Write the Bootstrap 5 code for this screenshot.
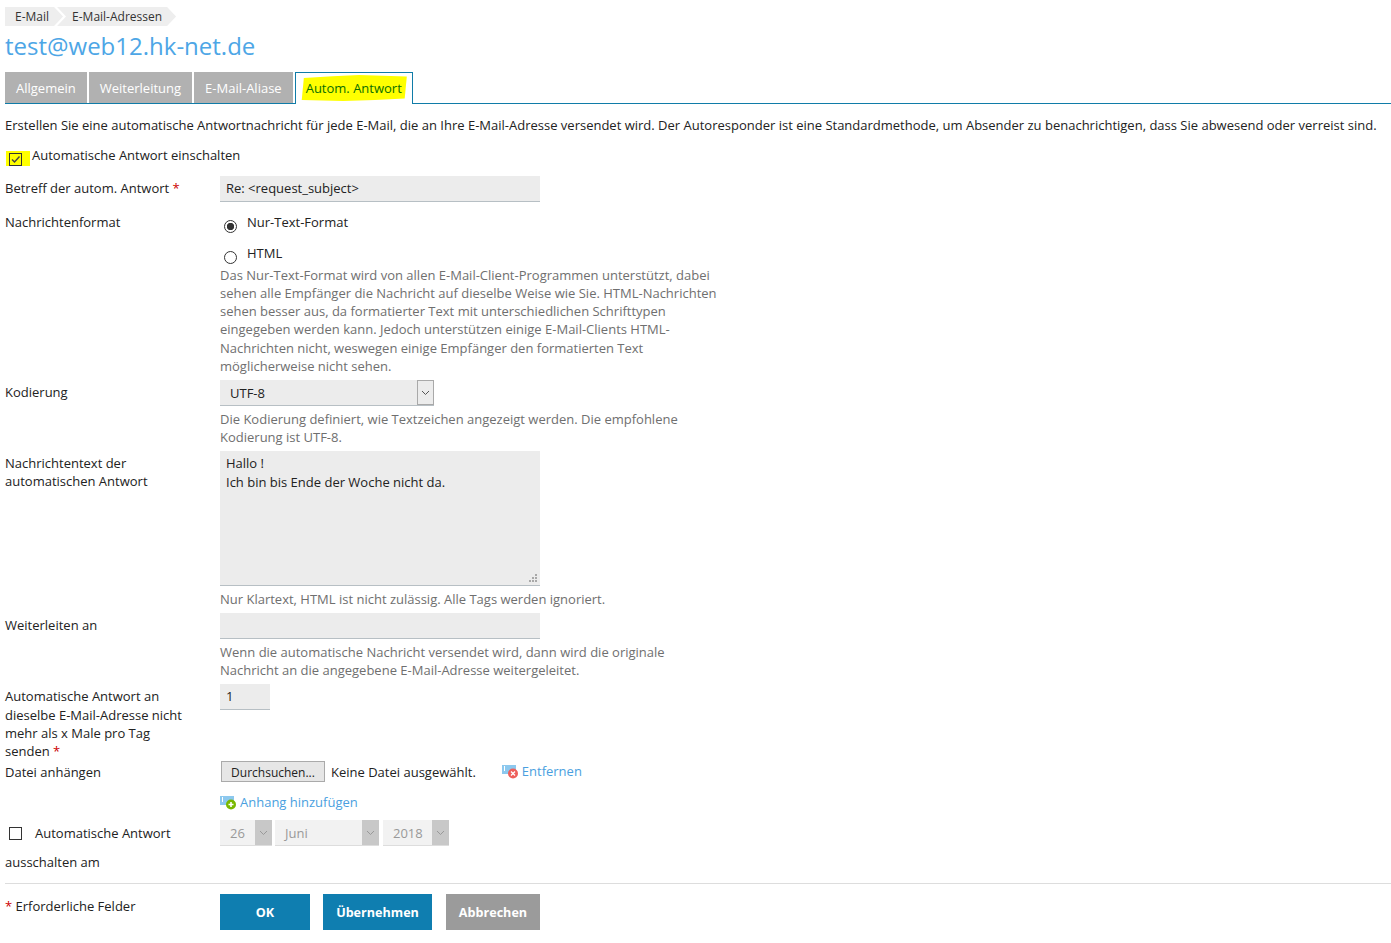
<!DOCTYPE html>
<html lang="de">
<head>
<meta charset="utf-8">
<title>Autom. Antwort</title>
<link href="https://cdn.jsdelivr.net/npm/bootstrap@5.3.0/dist/css/bootstrap.min.css" rel="stylesheet">
<style>
body{font-family:"Open Sans","Liberation Sans",sans-serif;font-size:13px;line-height:18.2px;color:#222;background:#fff;}
.pg{padding:7px 0 0 5px;width:1391px;}
.crumbs{gap:0;height:19px;font-size:12px;line-height:19px;color:#333;}
.crumb{background:#eee;padding:0 14px 0 10px;clip-path:polygon(0 0,calc(100% - 9px) 0,100% 50%,calc(100% - 9px) 100%,0 100%);}
.crumb+.crumb{margin-left:-6px;padding:0 14px 0 15px;clip-path:polygon(0 0,calc(100% - 9px) 0,100% 50%,calc(100% - 9px) 100%,0 100%,9px 50%);}
.ttl{font-size:24px;line-height:32px;color:#4da6e6;font-weight:400;margin:4px 0 10px;}
.tabs{border-bottom:1px solid #107ca8;height:32px;gap:2px;}
.tb{background:#b1b1b1;color:#fff;height:31px;line-height:33px;padding:0 11px;}
.tb.on{background:#fff;color:#0b6e00;border:1px solid #107ca8;border-bottom:0;height:32px;line-height:31px;padding:0 5px;position:relative;}
.hl{background:#ff0;padding:4px 5px;clip-path:polygon(3% 12%,30% 5%,55% 0,100% 6%,98% 90%,70% 96%,40% 100%,1% 96%);}
.intro{margin:12px 0 0;}
.chkrow{margin-top:12px;height:30px;}
.hlbox{background:#ff0;width:24px;height:15px;margin:5px 2px 0 1px;position:relative;}
.bx{appearance:none;width:13px;height:13px;border:1px solid #333;background:#fff;margin:0;display:block;flex:none;border-radius:0;}
.hlbox .bx{position:absolute;left:3px;top:2px;background:#ff0 url("data:image/svg+xml,%3Csvg xmlns='http://www.w3.org/2000/svg' viewBox='0 0 11 11'%3E%3Cpath d='M2 5.500l2.500 2.500L9.500 2.500' fill='none' stroke='%23444' stroke-width='1.400'/%3E%3C/svg%3E") center/11px no-repeat;}
.rad{appearance:none;width:13px;height:13px;border:1px solid #333;border-radius:50%;background:#fff;margin:7px 0 0 4px;flex:none;display:block;}
.rad:checked{background:radial-gradient(circle,#333 0 3.4px,#fff 4px);}
.radtxt{margin-left:10px;}
.radone{padding-top:3px;height:34px;}
.radtwo{height:22px;}
.frow{display:flex;}
.gap5{margin-top:5px;}
.gap4{margin-top:4px;}
.gap8{margin-top:8px;}
.gap10{margin-top:10px;}
.lbl{width:215px;flex:none;padding-right:28px;padding-top:3px;}
.lbl-up{padding-top:2.9px;}
.lbl-flat{padding-top:0;}
.fld{flex:none;width:500px;}
.hint{color:#6f6f6f;margin-top:-.4px;margin-bottom:.4px;}
.hint-sp{margin-top:3.6px;}
.hint-ta{margin-top:4px;margin-bottom:0;}
.star{color:#c00;}
.inp{display:block;background:#ececec;border:0;border-bottom:1px solid #b7bfc4;border-radius:0;padding:0 6px 2px;height:26px;width:320px;font-size:13px;line-height:22px;color:#222;font-family:inherit;outline:0;}
.num{width:50px;}
.tawrap{position:relative;width:320px;}
.ta{height:135px;line-height:19px;padding:3px 6px;resize:none;}
.grip{position:absolute;right:2px;bottom:3px;display:block;}
.sel{display:flex;height:26px;background:#ececec;border-bottom:1px solid #b7bfc4;line-height:26px;}
.sel-utf{width:214px;}
.sel-day{width:52px;}
.sel-mon{width:104px;margin-left:3px;}
.sel-yr{width:66px;margin-left:4px;}
.selt{flex:1;padding-left:10px;color:#222;}
.arr{width:17px;background:#ececec;border:1px solid #a9a9a9;display:flex;align-items:center;justify-content:center;}
.off{background:#f2f2f2;border-bottom:1px solid #ddd;}
.off .selt{color:#999;}
.off .arr{background:#c8c8c8;border:0;}
.lk{color:#4a9fe0;text-decoration:none;}
.lk-up{margin-top:-1px;}
.filerow{height:21px;margin-top:1px;}
.addrow{height:20px;margin-top:10px;}
.fbtn{background:#e6e6e6;border:1px solid #aaa;border-radius:0;height:21px;width:104px;margin-left:1px;padding:0;font-size:12px;line-height:21px;color:#222;font-family:inherit;}
.nofile{margin-left:6px;margin-top:1px;}
.attic{margin-left:26px;}
.offchk{height:26px;}
.offchk .bx{margin-left:4px;}
.offchk span{margin-left:13px;}
.offlab{margin-top:7px;}
.sep{border:0;border-top:1px solid #ddd;opacity:1;margin:12px 0 0;}
.act{height:36px;border:0;border-radius:0;color:#fff;font-weight:700;font-size:12.6px;padding:2px 0 0;font-family:inherit;}
.act:hover{color:#fff;}
.ok{background:#0f7eb0;}
.ok:hover{background:#0f7eb0;}
.no{background:#9b9b9b;}
.no:hover{background:#9b9b9b;}
.w-ok{width:90px;}
.w-app{width:109px;margin-left:13px;}
.w-no{width:94px;margin-left:14px;}
</style>
</head>
<body>
<div class="pg">
  <div class="crumbs d-flex">
    <div class="crumb">E-Mail</div>
    <div class="crumb">E-Mail-Adressen</div>
  </div>
  <h1 class="ttl">test@web12.hk-net.de</h1>
  <div class="tabs d-flex">
    <div class="tb">Allgemein</div>
    <div class="tb">Weiterleitung</div>
    <div class="tb">E-Mail-Aliase</div>
    <div class="tb on"><span class="hl">Autom. Antwort</span></div>
  </div>
  <p class="intro text-nowrap">Erstellen Sie eine automatische Antwortnachricht für jede E-Mail, die an Ihre E-Mail-Adresse versendet wird. Der Autoresponder ist eine Standardmethode, um Absender zu benachrichtigen, dass Sie abwesend oder verreist sind.</p>

  <div class="chkrow d-flex">
    <div class="hlbox"><input class="bx" type="checkbox" checked></div>
    <div>Automatische Antwort einschalten</div>
  </div>

  <div class="frow">
    <div class="lbl text-nowrap">Betreff der autom. Antwort <span class="star">*</span></div>
    <div class="fld"><input class="inp" type="text" value="Re: &lt;request_subject&gt;"></div>
  </div>

  <div class="frow mt-2">
    <div class="lbl">Nachrichtenformat</div>
    <div class="fld">
      <div class="d-flex radone"><input class="rad" type="radio" name="f" checked><span class="radtxt">Nur-Text-Format</span></div>
      <div class="d-flex radtwo"><input class="rad" type="radio" name="f"><span class="radtxt">HTML</span></div>
      <div class="hint">Das Nur-Text-Format wird von allen E-Mail-Client-Programmen unterstützt, dabei sehen alle Empfänger die Nachricht auf dieselbe Weise wie Sie. HTML-Nachrichten sehen besser aus, da formatierter Text mit unterschiedlichen Schrifttypen eingegeben werden kann. Jedoch unterstützen einige E-Mail-Clients HTML-Nachrichten nicht, weswegen einige Empfänger den formatierten Text möglicherweise nicht sehen.</div>
    </div>
  </div>

  <div class="frow gap5">
    <div class="lbl">Kodierung</div>
    <div class="fld">
      <div class="sel sel-utf"><div class="selt">UTF-8</div><div class="arr"><svg width="9" height="6" viewBox="0 0 9 6"><path d="M1 1l3.500 3.500L8 1" fill="none" stroke="#555"/></svg></div></div>
      <div class="hint hint-sp">Die Kodierung definiert, wie Textzeichen angezeigt werden. Die empfohlene Kodierung ist UTF-8.</div>
    </div>
  </div>

  <div class="frow gap4">
    <div class="lbl">Nachrichtentext der automatischen Antwort</div>
    <div class="fld">
      <div class="tawrap">
        <textarea class="inp ta">Hallo !
Ich bin bis Ende der Woche nicht da.</textarea>
        <svg class="grip" width="9" height="9" viewBox="0 0 9 9" fill="#a8a8a8"><rect x="6" y="0" width="2" height="2"/><rect x="3" y="3" width="2" height="2"/><rect x="6" y="3" width="2" height="2"/><rect x="0" y="6" width="2" height="2"/><rect x="3" y="6" width="2" height="2"/><rect x="6" y="6" width="2" height="2"/></svg>
      </div>
      <div class="hint hint-ta">Nur Klartext, HTML ist nicht zulässig. Alle Tags werden ignoriert.</div>
    </div>
  </div>

  <div class="frow gap5">
    <div class="lbl">Weiterleiten an</div>
    <div class="fld">
      <input class="inp" type="text">
      <div class="hint hint-sp">Wenn die automatische Nachricht versendet wird, dann wird die originale Nachricht an die angegebene E-Mail-Adresse weitergeleitet.</div>
    </div>
  </div>

  <div class="frow gap5">
    <div class="lbl lbl-up">Automatische Antwort an dieselbe E-Mail-Adresse nicht mehr als x Male pro Tag senden <span class="star">*</span></div>
    <div class="fld"><input class="inp num" type="text" value="1"></div>
  </div>

  <div class="frow">
    <div class="lbl">Datei anhängen</div>
    <div class="fld">
      <div class="d-flex align-items-center filerow">
        <button class="fbtn" type="button">Durchsuchen...</button>
        <span class="nofile">Keine Datei ausgewählt.</span>
        <svg class="attic" width="16" height="15" viewBox="0 0 16 15"><rect x="0" y="1" width="14" height="9" fill="#8cc8ee"/><rect x="2" y="2" width="1" height="5" fill="#fff"/><circle cx="11" cy="9.500" r="5" fill="#ee5f5b"/><path d="M9 7.500l4 4M13 7.500l-4 4" stroke="#fff" stroke-width="1.300"/></svg>
        <a class="lk ms-1 lk-up" href="#">Entfernen</a>
      </div>
      <div class="d-flex align-items-center addrow">
        <svg width="16" height="15" viewBox="0 0 16 15"><rect x="0" y="1" width="14" height="9" fill="#8cc8ee"/><rect x="2" y="2" width="1" height="5" fill="#fff"/><circle cx="11" cy="9.500" r="5" fill="#7ab800"/><path d="M8.500 9.500h5M11 7v5" stroke="#fff" stroke-width="1.600"/></svg>
        <a class="lk ms-1" href="#">Anhang hinzufügen</a>
      </div>
    </div>
  </div>

  <div class="frow gap8">
    <div class="lbl lbl-flat">
      <div class="d-flex align-items-center offchk"><input class="bx" type="checkbox"><span class="text-nowrap">Automatische Antwort</span></div>
      <div class="offlab">ausschalten am</div>
    </div>
    <div class="fld d-flex">
      <div class="sel off sel-day"><div class="selt">26</div><div class="arr"><svg width="9" height="6" viewBox="0 0 9 6"><path d="M1 1l3.500 3.500L8 1" fill="none" stroke="#999"/></svg></div></div>
      <div class="sel off sel-mon"><div class="selt">Juni</div><div class="arr"><svg width="9" height="6" viewBox="0 0 9 6"><path d="M1 1l3.500 3.500L8 1" fill="none" stroke="#999"/></svg></div></div>
      <div class="sel off sel-yr"><div class="selt">2018</div><div class="arr"><svg width="9" height="6" viewBox="0 0 9 6"><path d="M1 1l3.500 3.500L8 1" fill="none" stroke="#999"/></svg></div></div>
    </div>
  </div>

  <hr class="sep">
  <div class="frow gap10">
    <div class="lbl"><span class="star">*</span> Erforderliche Felder</div>
    <div class="d-flex">
      <button class="btn act ok w-ok" type="button">OK</button>
      <button class="btn act ok w-app" type="button">Übernehmen</button>
      <button class="btn act no w-no" type="button">Abbrechen</button>
    </div>
  </div>
</div>
</body>
</html>
